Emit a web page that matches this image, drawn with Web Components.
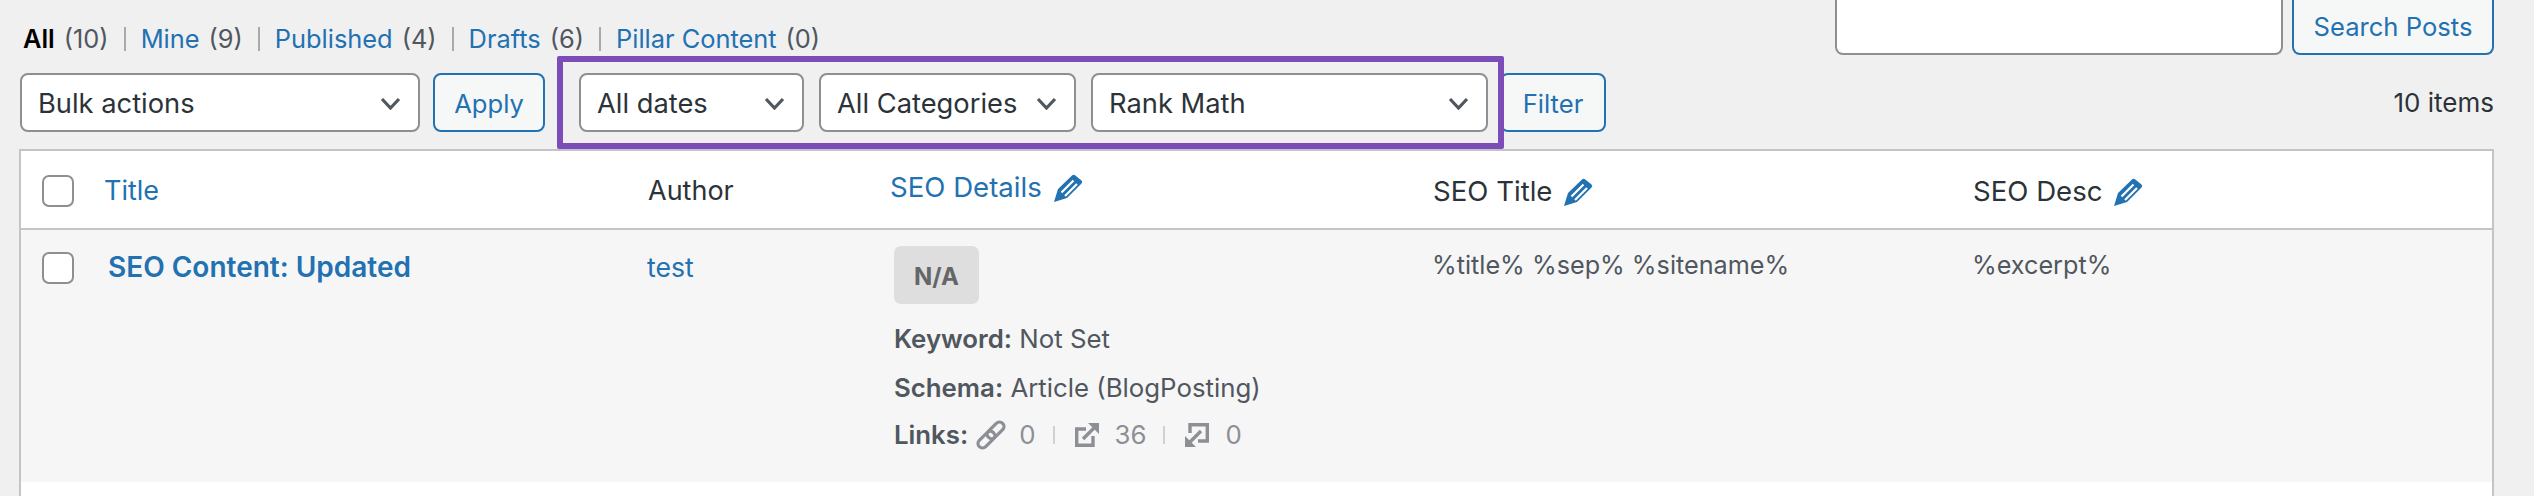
<!DOCTYPE html>
<html>
<head>
<meta charset="utf-8">
<style>
html, body { margin: 0; padding: 0; background: #f0f0f1; }
body { font: 26px/32px Inter, "Liberation Sans", sans-serif; color: #2c3338; width: 2534px; height: 496px; overflow: hidden; }
</style>
</head>
<body>
<wp-top-bar>
    <wp-views slot="left">
        <wp-view current count="10">All</wp-view>
        <wp-view count="9">Mine</wp-view>
        <wp-view count="4">Published</wp-view>
        <wp-view count="6">Drafts</wp-view>
        <wp-view count="0" last>Pillar Content</wp-view>
    </wp-views>
    <wp-search slot="right" label="Search Posts"></wp-search>
</wp-top-bar>

<wp-tablenav>
    <wp-select style="width:400px">Bulk actions</wp-select>
    <wp-button style="width:112px;margin-left:13px">Apply</wp-button>
    <wp-filter-box>
        <wp-select style="width:225px">All dates</wp-select>
        <wp-select style="width:257px">All Categories</wp-select>
        <wp-select style="width:397px">Rank Math</wp-select>
    </wp-filter-box>
    <wp-button style="width:106px;margin-left:-4px">Filter</wp-button>
    <span slot="count">10 items</span>
</wp-tablenav>

<wp-list-table>
    <wp-row head>
        <wp-checkbox></wp-checkbox>
        <a>Title</a>
        <span>Author</span>
        <a class="up">SEO Details <wp-pencil></wp-pencil></a>
        <span class="wide">SEO Title <wp-pencil></wp-pencil></span>
        <span class="wide">SEO Desc <wp-pencil></wp-pencil></span>
    </wp-row>
    <wp-row>
        <wp-checkbox></wp-checkbox>
        <a class="title">SEO Content: Updated</a>
        <a class="author">test</a>
        <seo-details keyword="Not Set" schema="Article (BlogPosting)" internal="0" external="36" incoming="0"></seo-details>
        <span class="small">%title% %sep% %sitename%</span>
        <span class="small">%excerpt%</span>
    </wp-row>
</wp-list-table>

<script>
class WpTopBar extends HTMLElement {
    constructor() {
        super();
        this.attachShadow({ mode: "open" }).innerHTML = `
<style>
:host { display: flex; justify-content: space-between; height: 56px; padding: 0 40px 0 23px; box-sizing: border-box; }
</style>
<slot name="left"></slot><slot name="right"></slot>`;
    }
}
customElements.define("wp-top-bar", WpTopBar);

class WpViews extends HTMLElement {
    constructor() {
        super();
        this.attachShadow({ mode: "open" }).innerHTML = `
<style>
:host { display: flex; padding-top: 23px; height: 32px; }
</style>
<slot></slot>`;
    }
}
customElements.define("wp-views", WpViews);

class WpView extends HTMLElement {
    constructor() {
        super();
        const count = this.getAttribute("count");
        const sep = this.hasAttribute("last") ? "" : `<span class="sep"></span>`;
        this.attachShadow({ mode: "open" }).innerHTML = `
<style>
:host { display: inline-flex; align-items: center; white-space: nowrap; font-size: 25.400px; }
.name { color: #2271b1; }
:host([current]) .name { color: #000; font-weight: 600; }
.count { color: #50575e; margin-left: 9px; }
.sep { width: 2px; height: 24px; background: #a7aaad; margin: 0 15px; }
</style>
<span class="name"><slot></slot></span><span class="count">(${count})</span>${sep}`;
    }
}
customElements.define("wp-view", WpView);

class WpSearch extends HTMLElement {
    constructor() {
        super();
        this.attachShadow({ mode: "open" }).innerHTML = `
<style>
:host { display: flex; gap: 9px; height: 55px; }
.input { width: 448px; box-sizing: border-box; background: #fff; border: 2px solid #8c8f94; border-top: 0; border-radius: 0 0 8px 8px; }
.btn { width: 202px; box-sizing: border-box; border: 2px solid #2271b1; border-top: 0; border-radius: 0 0 8px 8px; background: #f6f7f7; color: #2271b1; text-align: center; line-height: 53px; font-size: 25.600px; }
</style>
<div class="input"></div><div class="btn">${this.getAttribute("label")}</div>`;
    }
}
customElements.define("wp-search", WpSearch);

class WpTablenav extends HTMLElement {
    constructor() {
        super();
        this.attachShadow({ mode: "open" }).innerHTML = `
<style>
:host { display: flex; align-items: center; height: 93px; padding: 0 40px 0 20px; box-sizing: border-box; position: relative; z-index: 1; }
.count { margin-left: auto; font-size: 26px; color: #2c3338; }
</style>
<slot></slot><span class="count"><slot name="count"></slot></span>`;
    }
}
customElements.define("wp-tablenav", WpTablenav);

class WpFilterBox extends HTMLElement {
    constructor() {
        super();
        this.attachShadow({ mode: "open" }).innerHTML = `
<style>
:host { display: flex; gap: 15px; align-items: center; box-sizing: border-box; height: 93px; margin-left: 12px; padding: 0 10px 0 16px; border: 6px solid #7c4cb8; border-radius: 2px; position: relative; z-index: 1; }
</style>
<slot></slot>`;
    }
}
customElements.define("wp-filter-box", WpFilterBox);

class WpSelect extends HTMLElement {
    constructor() {
        super();
        this.attachShadow({ mode: "open" }).innerHTML = `
<style>
:host { display: flex; align-items: center; justify-content: space-between; box-sizing: border-box; height: 59px; padding: 2px 17px 0 16px; background: #fff; border: 2px solid #8c8f94; border-radius: 8px; color: #2c3338; font-size: 27.300px; white-space: nowrap; flex: none; }
svg { display: block; width: 21px; height: 13px; flex: none; }
</style>
<slot></slot>
<svg viewBox="0 0 21 13"><path d="M2 2l8.500 9L19 2" fill="none" stroke="#50575e" stroke-width="3.200"/></svg>`;
    }
}
customElements.define("wp-select", WpSelect);

class WpButton extends HTMLElement {
    constructor() {
        super();
        this.attachShadow({ mode: "open" }).innerHTML = `
<style>
:host { display: flex; align-items: center; justify-content: center; box-sizing: border-box; height: 59px; padding-top: 2px; background: #f6f7f7; border: 2px solid #2271b1; border-radius: 8px; color: #2271b1; font-size: 25.600px; flex: none; }
</style>
<slot></slot>`;
    }
}
customElements.define("wp-button", WpButton);

class WpListTable extends HTMLElement {
    constructor() {
        super();
        this.attachShadow({ mode: "open" }).innerHTML = `
<style>
:host { display: block; margin: 0 40px 0 19px; background: #fff; border: 2px solid #c3c4c7; border-bottom: 0; height: 347px; box-sizing: border-box; }
</style>
<slot></slot>`;
    }
}
customElements.define("wp-list-table", WpListTable);

class WpRow extends HTMLElement {
    constructor() {
        super();
        this.attachShadow({ mode: "open" }).innerHTML = `
<style>
:host { display: grid; grid-template-columns: 83px 544px 243px 542px 540px 1fr; box-sizing: border-box; height: 252px; padding-top: 21px; background: #f6f6f7; }
:host([head]) { height: 79px; padding-top: 2px; background: #fff; border-bottom: 2px solid #c3c4c7; align-items: center; font-size: 27px; }
::slotted(a) { color: #2271b1; }
::slotted(.up) { margin: -8px 0 0 -1px; font-size: 27.600px; }
::slotted(.wide) { font-size: 27.600px; }
::slotted(.title) { font-weight: 600; font-size: 28px; margin-left: 4px; }
::slotted(.author) { font-size: 26.600px; margin-left: -1px; }
::slotted(.small) { font-size: 25.200px; color: #50575e; margin: -2px 0 0 -1px; }
::slotted(wp-checkbox) { margin-top: 1px; }
::slotted(seo-details) { margin-top: -5px; }
</style>
<slot></slot>`;
    }
}
customElements.define("wp-row", WpRow);

class WpCheckbox extends HTMLElement {
    constructor() {
        super();
        this.attachShadow({ mode: "open" }).innerHTML = `
<style>
:host { display: block; width: 32px; height: 32px; margin-left: 21px; box-sizing: border-box; background: #fff; border: 2px solid #8c8f94; border-radius: 7px; }
</style>`;
    }
}
customElements.define("wp-checkbox", WpCheckbox);

class WpPencil extends HTMLElement {
    constructor() {
        super();
        this.attachShadow({ mode: "open" }).innerHTML = `
<style>
:host { display: inline-block; width: 29px; height: 28px; margin-left: 4px; vertical-align: -5px; }
svg { display: block; width: 100%; height: 100%; }
</style>
<svg viewBox="0 0 29 28">
<path d="M0 28L4 15 18 1.500Q19.500 0 21 1.200L27.500 6.500Q29 8 27.500 9.500L13 24Z" fill="#2271b1"/>
<path d="M7.500 18.500L19.500 6.500M11 22L23 10" stroke="#fff" stroke-width="2.200"/>
</svg>`;
    }
}
customElements.define("wp-pencil", WpPencil);

class SeoDetails extends HTMLElement {
    constructor() {
        super();
        const a = (n) => this.getAttribute(n);
        this.attachShadow({ mode: "open" }).innerHTML = `
<style>
:host { display: block; margin-left: 3px; font-size: 25.800px; line-height: 32px; color: #50575e; white-space: nowrap; }
.badge { display: flex; align-items: center; justify-content: center; width: 85px; height: 58px; padding-top: 3px; box-sizing: border-box; border-radius: 7px; background: #dedede; color: #666; font-size: 24px; font-weight: 700; margin-bottom: 19px; }
.line { height: 49px; }
.line + .line { height: 47px; }
b { font-weight: 600; }
.links { display: flex; align-items: center; height: 32px; }
.links svg { flex: none; display: block; }
.num { color: #8c8f94; }
.div { width: 2px; height: 18px; background: #d0d1d3; margin: 0 20px 0 17px; }
</style>
<div class="badge">N/A</div>
<div class="line"><b>Keyword:</b> ${a("keyword")}</div>
<div class="line"><b>Schema:</b> ${a("schema")}</div>
<div class="links">
    <b style="margin-right:8px">Links:</b>
    <svg width="30" height="30" viewBox="0 0 30 30" fill="none" stroke="#8c8f94" stroke-width="3.200">
        <g transform="rotate(-45 15 15)">
            <rect x="-1.500" y="10.500" width="20" height="9" rx="4.500"/>
            <rect x="11.500" y="10.500" width="20" height="9" rx="4.500"/>
        </g>
    </svg>
    <span class="num" style="margin-left:13px">${a("internal")}</span>
    <span class="div"></span>
    <svg width="24" height="24" viewBox="0 0 24 24" fill="none" stroke="#8c8f94" stroke-width="3.400">
        <path d="M11 6H1.700v16.300H18V13"/>
        <path d="M8 16L20 4"/>
        <path d="M13 0h11v11z" fill="#8c8f94" stroke="none"/>
    </svg>
    <span class="num" style="margin-left:16px">${a("external")}</span>
    <span class="div"></span>
    <svg width="24" height="24" viewBox="0 0 24 24" fill="none" stroke="#8c8f94" stroke-width="3.400">
        <path d="M5 10V1.700h17.300V18H13"/>
        <path d="M16 8L4 20"/>
        <path d="M0 13v11h11z" fill="#8c8f94" stroke="none"/>
    </svg>
    <span class="num" style="margin-left:16px">${a("incoming")}</span>
</div>`;
    }
}
customElements.define("seo-details", SeoDetails);
</script>
</body>
</html>
